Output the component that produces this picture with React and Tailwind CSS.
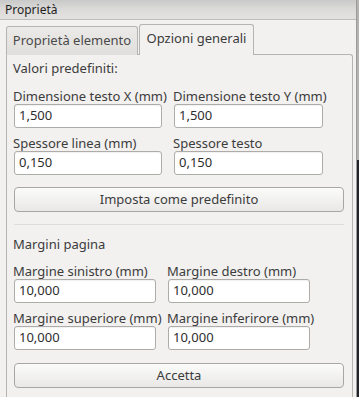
export default function App() {
  const font = { fontFamily: '"Noto Sans", "Open Sans", sans-serif' };
  return (
    <div className="flex h-[397px] w-[359px] overflow-hidden bg-[#f2f1f0] text-[13px] text-[#3c3c3c]" style={font}>
      <div className="flex w-[356px] flex-col">
        <div className="flex h-[20px] items-center border-b border-[#bdbcba] bg-gradient-to-b from-[#c9c9c9] via-[#dcdbd9] to-[#e3e2e0] pl-[5px] text-[12px] leading-none text-[#1e1e1e]">
          Proprietà
        </div>
        <div className="flex flex-1 flex-col pl-[6px] pr-[3px]">
          <div className="relative z-10 mt-[4px] -mb-px flex items-end">
            <div className="flex h-[29px] w-[132px] items-center justify-center rounded-t-[3px] border border-b-0 border-[#b6b4b1] bg-gradient-to-b from-[#ebeae8] to-[#e0dfdc] text-[#4a4a4a]">
              Proprietà elemento
            </div>
            <div className="ml-[1px] flex h-[31px] w-[115px] items-center justify-center rounded-t-[3px] border border-b-0 border-[#b6b4b1] bg-[#f2f1f0] pb-[2px]">
              Opzioni generali
            </div>
          </div>
          <div className="flex flex-1 flex-col rounded-tr-[3px] border border-b-0 border-[#b6b4b1] pl-[6px] pr-[8px] pt-[5px]">
            <div className="h-[16px] leading-[16px]">Valori predefiniti:</div>
            <div className="mt-[12px] grid grid-cols-[148px_149px] gap-x-[12px] gap-y-[7px] pl-px">
              <Field label="Dimensione testo X (mm)" value="1,500" />
              <Field label="Dimensione testo Y (mm)" value="1,500" />
              <Field label="Spessore linea (mm)" value="0,150" />
              <Field label="Spessore testo" value="0,150" />
            </div>
            <Button className="mt-[12px]">Imposta come predefinito</Button>
            <div className="mt-[12px] ml-px h-px bg-[#dddcda]" />
            <div className="mt-[11px] h-[16px] leading-[16px]">Margini pagina</div>
            <div className="mt-[11px] grid grid-cols-[142px_142px] gap-x-[12px] gap-y-[7px] pl-px">
              <Field label="Margine sinistro (mm)" value="10,000" />
              <Field label="Margine destro (mm)" value="10,000" />
              <Field label="Margine superiore (mm)" value="10,000" />
              <Field label="Margine inferirore (mm)" value="10,000" />
            </div>
            <Button className="mt-[13px]">Accetta</Button>
          </div>
        </div>
      </div>
      <div className="flex w-[3px] flex-col border-l border-[#9c9b99]">
        <div className="h-[160px] bg-[#b4b3b1]" />
        <div className="flex-1 bg-[#20222c]" />
      </div>
    </div>
  );
}

function Field({ label, value }) {
  return (
    <div className="flex flex-col">
      <div className="-ml-px h-[16px] whitespace-nowrap leading-[16px]">{label}</div>
      <div className="flex h-[24px] items-center rounded-[3px] border border-[#aeaca9] bg-white pl-[4px] text-[#2e2e2e] shadow-[inset_0_1px_1px_rgba(0,0,0,0.06)]">
        {value}
      </div>
    </div>
  );
}

function Button({ children, className = "" }) {
  return (
    <div
      className={`ml-px flex h-[25px] items-center justify-center rounded-[4px] border border-[#a9a7a4] bg-gradient-to-b from-[#fbfbfa] to-[#e9e8e6] text-[#3c3c3c] ${className}`}
    >
      {children}
    </div>
  );
}
